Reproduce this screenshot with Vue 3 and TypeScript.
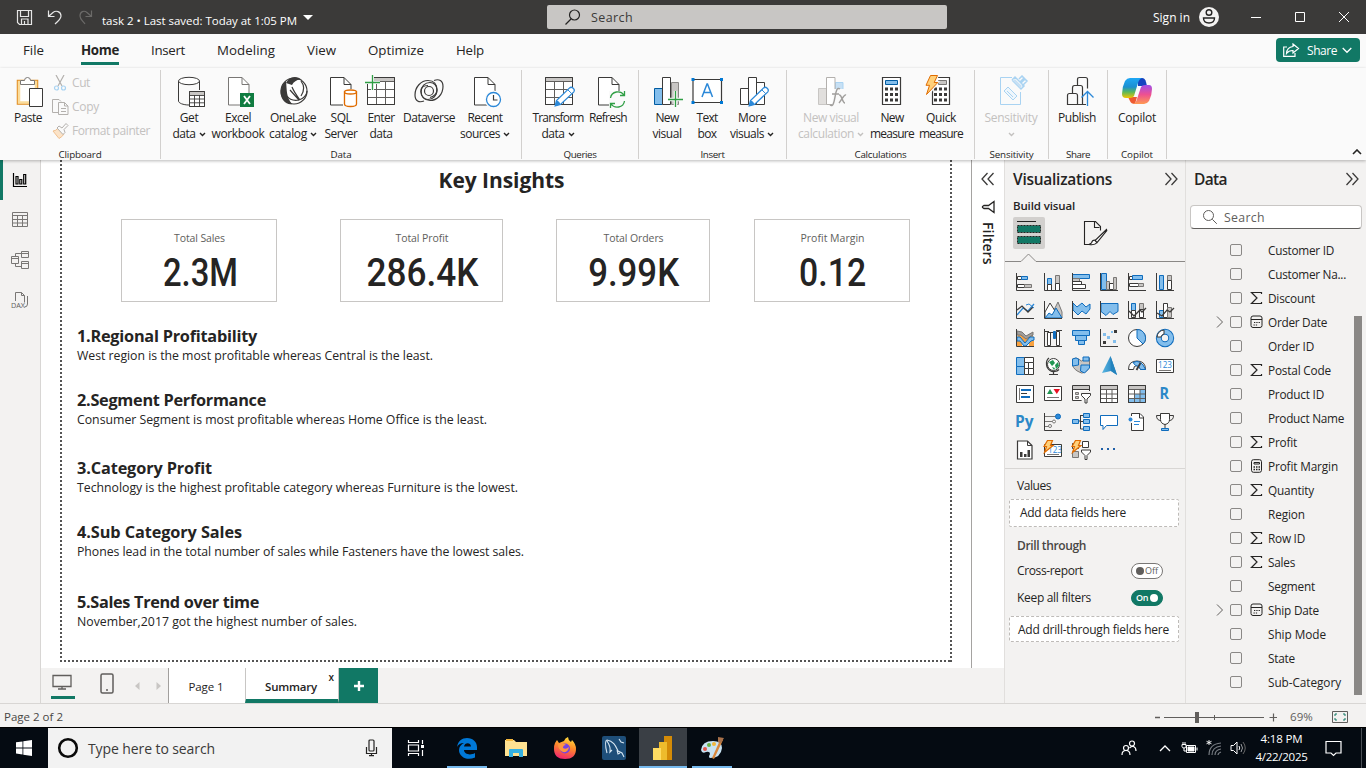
<script setup lang="ts">
interface Label { t: string; w: number; caret?: boolean }
interface Tool { icon: string; w: number; lines: Label[]; off?: boolean }
interface Group { name: string; nw: number; width: number; pad: number; tools: Tool[] }

const vFit = {
  mounted(el: HTMLElement, b: { value: number; modifiers: Record<string, boolean> }) {
    const r = document.createRange()
    r.selectNodeContents(el)
    const w = r.getBoundingClientRect().width
    if (b.modifiers.scale) el.style.transform = `scaleX(${b.value / w})`
    else el.style.letterSpacing = `${(b.value - w) / (el.textContent || ' ').length}px`
  },
}

const K = '#3b3a39'
const B = '#0f6cbd'
const L = '#83beec'
const page = (x: number, c = K) =>
  `<path d="M${x + 0.5} 2.5h13.5l7 7v20.5h-20.5z" fill="#fff" stroke="${c}"/><path d="M${x + 14} 2.5v7h7" fill="none" stroke="${c}"/>`
const grid = (x: number) =>
  `<path d="M${x + 0.5} 2.5h27v27h-27z" fill="#fff" stroke="${K}"/><path d="M${x + 1} 3h26v3.500h-26z" fill="#c8c6c4"/><path d="M${x} 6.500h28M${x} 14.500h28M${x} 22.500h28M${x + 9.5} 6v24M${x + 18.5} 6v24" stroke="#605e5c" fill="none"/><path d="M${x + 0.5} 2.500h27v27h-27z" fill="none" stroke="${K}"/>`
const pencil = '<path d="M13.200 30.800l1.300-5.300L27.600 12.900q1.600-1.400 3.600.4t.4 3.800L18.500 29.500z" fill="#fff" stroke="#2b88d8" stroke-width="1.300"/><path d="M13 31l1.500-5.500q3 .5 4 4z" fill="#2b88d8"/><path d="M26 15l3.700 3.600" stroke="#2b88d8"/>'
const dots = (x: number, y: number) => {
  let d = ''
  for (let r = 0; r < 3; r++) for (let c = 0; c < 3; c++) d += `M${x + c * 5} ${y + r * 5.5}h3v3h-3z`
  return `<path d="${d}" fill="${K}"/>`
}

const icons: Record<string, string> = {
  get: `<path d="M5.500 6v20c0 2 4.500 4 10.500 4M26.500 6v9" fill="none" stroke="${K}"/><ellipse cx="16" cy="6" rx="10.500" ry="3.700" fill="#fff" stroke="${K}"/><path d="M16.500 16.500h15v15h-15z" fill="#fff" stroke="${K}"/><path d="M16.500 17h15v3h-15z" fill="#c8c6c4"/><path d="M16 20.500h16M16 24h16M16 27.800h16M21.500 20v12M26.500 20v12M16.500 16.500h15v15h-15z" stroke="${K}" stroke-width=".9" fill="none"/>`,
  excel: `${page(6, '#797775')}<path d="M18 18h14v14H18z" fill="#107c41"/><path d="M22 21l6 8M28 21l-6 8" stroke="#fff" stroke-width="1.800"/>`,
  lake: `<circle cx="17" cy="16" r="13" fill="#fff" stroke="${K}" stroke-width="1.200"/><path d="M9 8c3-7 11-8 16-3-4-1-8 1-10 5z" fill="${K}"/><path d="M9 6c-6 5-7 13-3 19 3 4 7 5 9 4-6-7-5-14-6-23z" fill="${K}"/><path d="M13 15l9 10c4-1 8-5 8-9M22 25c-6 1-10-1-12-4M15 12c2 5 5 9 8 13M24 6c3 4 4 9 0 15" fill="none" stroke="${K}" stroke-width="1.200"/>`,
  sql: `${page(5)}<path d="M18 14h15v18H18z" fill="#fafafa"/><path d="M19.500 17v12c0 1.500 3 2.500 6 2.500s6-1 6-2.500V17z" fill="#fff" stroke="#e06c00" stroke-width="1.300"/><ellipse cx="25.500" cy="17" rx="6" ry="2" fill="#fff" stroke="#e06c00" stroke-width="1.300"/>`,
  enter: `${grid(2)}<path d="M0 0h9v9H0z" fill="#fafafa"/><path d="M7.500 0v15M0 7.500h15" stroke="#fafafa" stroke-width="3"/><path d="M7.500 0v15M0 7.500h15" stroke="#2f9e44" stroke-width="1.300"/>`,
  verse: `<g fill="none" stroke="${K}" stroke-width="1.200"><circle cx="16" cy="16" r="4.500"/><path d="M21 5.500c5-2 9 0 9 6 0 8-6 14-13 14-5 0-9-4-9-9s4-9 9-9c4 0 7 3 7 7 0 5-3 7-7 8"/><path d="M11 26c-5 2-9 0-9-6C2 12 8 5.500 15 5.500c6 0 9 4 9 10 0 5-4 9-9 9-4 0-7-3-7-8 0-4 3-6 7-6"/></g>`,
  recent: `${page(5)}<circle cx="24.500" cy="24.500" r="9" fill="#fafafa"/><circle cx="24.500" cy="24.500" r="7" fill="#fff" stroke="#2b88d8" stroke-width="1.300"/><path d="M24.500 20v5h4" fill="none" stroke="${K}" stroke-width="1.200"/>`,
  transform: `${grid(3)}${pencil}`,
  refresh: `${page(6)}<path d="M17 16h17v17H17z" fill="#fafafa"/><path d="M18.500 23c1-7 10-8 13.500-3M32.500 16v4.500H28M32.500 26c-1 7-10 8-13.500 3M18.500 33v-4.500H23" fill="none" stroke="#2f9e44" stroke-width="1.300"/>`,
  visual: `<path d="M3.500 13.500h8v16h-8z" fill="${L}" stroke="#005ba1"/><path d="M20.500 7.500h7v22h-7z" fill="#c8c6c4" stroke="#8a8886"/><path d="M11.500 2.500h8v27h-8z" fill="#fff" stroke="${K}"/><path d="M24.500 16v16M17 24.500h15" stroke="#fafafa" stroke-width="3.500"/><path d="M24.500 16v16M17 24.500h15" stroke="#2f9e44" stroke-width="1.300"/>`,
  text: `<path d="M2 4.500h28.500v23H2z" fill="#fff" stroke="${K}" stroke-width="1.200"/><path d="M.5 3h3v3h-3zM29 3h3v3h-3zM.5 26h3v3h-3zM29 26h3v3h-3z" fill="#0078d4"/><path d="M11 22l5-13h.5l5 13M12.800 17.500h7" fill="none" stroke="#2b88d8" stroke-width="1.500"/>`,
  more: `<path d="M4.500 13.500h8v16h-8zM20.500 7.500h8v22h-8zM12.500 2.500h8v27h-8z" fill="#fff" stroke="${K}"/>${pencil}`,
  calc: `<path d="M3.500 13.500h8v16h-8z" fill="#e1dfdd" stroke="#c8c6c4"/><path d="M20.500 7.500h7.500v10h-7.500z" fill="#c7e0f4" stroke="#a9d3f2"/><path d="M11.500 2.500h8.500v27h-8.500z" fill="#fff" stroke="#b3b0ad"/><path d="M19 14h13v16H17z" fill="#fafafa"/><path d="M25 14c-3-2-4 2-5 8s-2 10-5 8M17 19h7M24 20c3-1 3 8 6 8M31 20c-2-1-5 6-7 8" fill="none" stroke="#a19f9d" stroke-width="1.500"/>`,
  measure: `<path d="M6.500 2.500h18v27h-18z" fill="#fff" stroke="${K}" stroke-width="1.200"/><path d="M9.500 5.500h12v4h-12z" fill="${L}" stroke="#005ba1"/>${dots(9, 12.500)}`,
  quick: `<path d="M7.500 2.500h17v27h-17z" fill="#fff" stroke="${K}" stroke-width="1.200"/><path d="M13.500 5.500h8v4h-8z" fill="#c8c6c4" stroke="#797775"/>${dots(9, 12.500)}<path d="M3 0h11l-2 6h3L3 22l2-8H0z" fill="#fafafa"/><path d="M5.500.5h7l-3.300 7h3.600L1.500 19.500l3-9.200H1z" fill="#ffd07a" stroke="#e06c00"/>`,
  sens: `<path d="M17 2.500H5.500v27h20V17" fill="none" stroke="#a9d3f2"/><path d="M9 16l4-4 9 9-4 4zM12 16l6 6" fill="#eef6fc" stroke="#a9d3f2"/><path d="M17 5l3-3 5 5 4-4-2-2-3 3M17 5l9 9 3-3-3-3 4-4 2 2-5 5" fill="none" stroke="#a9d3f2" stroke-width="1.500"/><path d="M19 5l7 7" stroke="#c7e0f4" stroke-width="2.500"/>`,
  publish: `<path d="M6.500 29.500v-9q0-2 2-2h6q2 0 2 2v9zM11.500 18v-5q0-2.500 2-2.500h6q2 0 2 2v17h-5M16.500 10V4.500q0-2 2-2h6q2 0 2 2v9M21 29.500h4" fill="none" stroke="${K}" stroke-width="1.200"/><path d="M26.500 31V17M20.500 22.500l6-6 6 6" fill="none" stroke="#2b88d8" stroke-width="1.300"/>`,
  copilot: `<defs><linearGradient id="ca" x1="0" y1="0" x2="0" y2="1"><stop offset="0" stop-color="#1ea7f5"/><stop offset=".45" stop-color="#1b8fd0"/><stop offset=".7" stop-color="#5ab85a"/><stop offset="1" stop-color="#f5c400"/></linearGradient><linearGradient id="cb" x1="0" y1="0" x2="0" y2="1"><stop offset="0" stop-color="#a04ee8"/><stop offset=".5" stop-color="#ee5091"/><stop offset="1" stop-color="#ff9a52"/></linearGradient></defs><path d="M17 3h4q3 0 4 4l1 4h-9z" fill="#1544c0"/><path d="M7 22h9l-2 7q-4 0-5-3z" fill="#ee5a32"/><path d="M9 3h12q-3 1-4 5l-4 13q-1 2-4 2H5q-4 0-4-4 0-7 3-13 2-3 5-3z" fill="url(#ca)"/><path d="M23 29H12q3-1 4-5l4-12q1-2 4-2h4q3 0 3 4 0 6-3 12-2 3-5 3z" fill="url(#cb)"/>`,
}

const groups: Group[] = [
  { name: 'Data', nw: 21, width: 361, pad: 6, tools: [
    { icon: 'get', w: 44, lines: [{ t: 'Get', w: 18.500 }, { t: 'data', w: 23, caret: true }] },
    { icon: 'excel', w: 54, lines: [{ t: 'Excel', w: 26 }, { t: 'workbook', w: 53 }] },
    { icon: 'lake', w: 56, lines: [{ t: 'OneLake', w: 46 }, { t: 'catalog', w: 38, caret: true }] },
    { icon: 'sql', w: 40, lines: [{ t: 'SQL', w: 21 }, { t: 'Server', w: 33 }] },
    { icon: 'enter', w: 40, lines: [{ t: 'Enter', w: 27 }, { t: 'data', w: 23 }] },
    { icon: 'verse', w: 56, lines: [{ t: 'Dataverse', w: 52 }] },
    { icon: 'recent', w: 56, lines: [{ t: 'Recent', w: 35 }, { t: 'sources', w: 40, caret: true }] },
  ] },
  { name: 'Queries', nw: 33, width: 117, pad: 10, tools: [
    { icon: 'transform', w: 52, lines: [{ t: 'Transform', w: 51 }, { t: 'data', w: 23, caret: true }] },
    { icon: 'refresh', w: 48, lines: [{ t: 'Refresh', w: 38 }] },
  ] },
  { name: 'Insert', nw: 24, width: 148, pad: 10, tools: [
    { icon: 'visual', w: 36, lines: [{ t: 'New', w: 23 }, { t: 'visual', w: 29 }] },
    { icon: 'text', w: 44, lines: [{ t: 'Text', w: 21 }, { t: 'box', w: 19 }] },
    { icon: 'more', w: 46, lines: [{ t: 'More', w: 28 }, { t: 'visuals', w: 34, caret: true }] },
  ] },
  { name: 'Calculations', nw: 52, width: 188, pad: 6, tools: [
    { icon: 'calc', w: 76, off: true, lines: [{ t: 'New visual', w: 56 }, { t: 'calculation', w: 56, caret: true }] },
    { icon: 'measure', w: 46, lines: [{ t: 'New', w: 23 }, { t: 'measure', w: 44 }] },
    { icon: 'quick', w: 52, lines: [{ t: 'Quick', w: 30 }, { t: 'measure', w: 44 }] },
  ] },
  { name: 'Sensitivity', nw: 44, width: 74, pad: 0, tools: [
    { icon: 'sens', w: 72, off: true, lines: [{ t: 'Sensitivity', w: 53 }, { t: '', w: 0, caret: true }] },
  ] },
  { name: 'Share', nw: 24, width: 59, pad: 0, tools: [{ icon: 'publish', w: 56, lines: [{ t: 'Publish', w: 38 }] }] },
  { name: 'Copilot', nw: 32, width: 59, pad: 0, tools: [{ icon: 'copilot', w: 58, lines: [{ t: 'Copilot', w: 38 }] }] },
]

const menu = [
  { t: 'File', w: 21 }, { t: 'Home', w: 38 }, { t: 'Insert', w: 34 }, { t: 'Modeling', w: 58 },
  { t: 'View', w: 29 }, { t: 'Optimize', w: 56 }, { t: 'Help', w: 28 },
]

const cards = [
  { t: 'Total Sales', tw: 51, v: '2.3M', vw: 75, w: 156, gap: 0 },
  { t: 'Total Profit', tw: 53, v: '286.4K', vw: 112, w: 163, gap: 63 },
  { t: 'Total Orders', tw: 60, v: '9.99K', vw: 91, w: 154, gap: 53 },
  { t: 'Profit Margin', tw: 64, v: '0.12', vw: 67, w: 156, gap: 44 },
]

const insights = [
  { h: '1.Regional Profitability', hw: 180, p: 'West region is the most profitable whereas Central is the least.', pw: 356, y: 64 },
  { h: '2.Segment Performance', hw: 189, p: 'Consumer Segment is most profitable whereas Home Office is the least.', pw: 410, y: 68 },
  { h: '3.Category Profit', hw: 135, p: 'Technology is the highest profitable category whereas Furniture is the lowest.', pw: 441, y: 64 },
  { h: '4.Sub Category Sales', hw: 165, p: 'Phones lead in the total number of sales while Fasteners have the lowest sales.', pw: 447, y: 70 },
  { h: '5.Sales Trend over time', hw: 182, p: 'November,2017 got the highest number of sales.', pw: 280, y: 50 },
]

const axis = `<path d="M1.500 1v17.500H19" fill="none" stroke="${K}"/>`
const rc = (x: number, y: number, w: number, h: number, f: string, s: string) =>
  `<path d="M${x + 0.5} ${y + 0.5}h${w - 1}v${h - 1}h${1 - w}z" fill="${f}" stroke="${s}"/>`
const blue = (x: number, y: number, w: number, h: number) => rc(x, y, w, h, L, B)
const gray = (x: number, y: number, w: number, h: number) => rc(x, y, w, h, '#c8c6c4', '#797775')
const white = (x: number, y: number, w: number, h: number) => rc(x, y, w, h, '#fff', K)
const bolt = '<path d="M4.500.5h5l-2 5h2.500L1.500 12.500l2-6H1z" fill="#ffd07a" stroke="#e06c00" stroke-width="1.200"/>'
const funnel = (x: number, y: number) => `<path d="M${x} ${y}h9v2l-3.500 3.500v4h-2v-4L${x} ${y + 2}z" fill="#fff" stroke="${K}"/>`
const tbl = (blueFill = '') =>
  `${white(1, 1, 18, 18)}${blueFill}<path d="M2 2h16v3H2z" fill="#c8c6c4"/><path d="M1 5.500h18M1 10h18M1 14.500h18M7.500 5v14M13 5v14" stroke="#605e5c" fill="none"/><path d="M1.500 1.500h17v17h-17z" fill="none" stroke="${K}"/>`
const num = (x: number, y: number) =>
  `<text x="${x}" y="${y}" font-family="Open Sans" font-size="9" fill="#2b88d8" textLength="14" lengthAdjust="spacingAndGlyphs">123</text>`

const visuals: string[] = [
  `${white(2, 4, 5, 4)}${blue(6, 4, 7, 4)}${white(2, 12, 8, 4)}${gray(9, 12, 8, 4)}${axis}`,
  `${blue(4, 6, 5, 7)}${white(4, 12, 5, 7)}${gray(12, 3, 5, 9)}${white(12, 11, 5, 8)}${axis}`,
  `${blue(1, 2, 18, 5)}${gray(1, 6, 8, 4)}${white(1, 9, 10, 4)}${white(1, 12, 14, 5)}${axis}`,
  `${blue(2, 1, 6, 17)}${gray(7, 9, 4, 9)}${white(10, 11, 5, 7)}${gray(14, 5, 4, 13)}${axis}`,
  `${white(2, 4, 5, 4)}${blue(5, 3, 11, 5)}${white(2, 11, 10, 4)}${gray(11, 11, 6, 4)}${axis}`,
  `${blue(4, 3, 5, 15)}${gray(12, 3, 5, 6)}${white(12, 8, 5, 10)}${axis}`,
  `<path d="M2 15l6-7 5 3 6-7" fill="none" stroke="#2b88d8" stroke-width="1.300"/><path d="M2 10l5-4 6 6 5-5" fill="none" stroke="${K}" stroke-width="1.300"/><path d="M11 5l3-1 5 4" fill="none" stroke="#2b88d8"/>${axis}`,
  `<path d="M9 14l6-12 4 10v6H9z" fill="#c8c6c4" stroke="#797775"/><path d="M2 12l5-9 5 8-4 7H2z" fill="#fff" stroke="${K}"/><path d="M2 18l4-5 3 2 4-7 6 10z" fill="${L}" stroke="${B}"/>${axis}`,
  `<path d="M2 3l4 4 5-4 4 4 4-3v5l-4 5-4-3-4 4-5-5z" fill="${L}" stroke="${B}"/>${axis}`,
  `<path d="M2 3.500h17v8l-5 3-3-3-4 4-5-4z" fill="${L}" stroke="${B}"/>${axis}`,
  `${blue(4, 3, 5, 8)}${white(4, 10, 5, 8)}${gray(12, 3, 5, 7)}${white(12, 9, 5, 9)}<path d="M2 11l5 5 6-6 2 2 4-4" fill="none" stroke="${K}" stroke-width="1.300"/>${axis}`,
  `${blue(4, 10, 5, 8)}${white(8, 3, 5, 15)}${gray(12, 7, 5, 11)}<path d="M2 13l5 3 5-6 3 2 4-4" fill="none" stroke="${K}" stroke-width="1.300"/>${axis}`,
  `<path d="M2 12h5v6H2zM14 12h5v6h-5zM2 5h3l5 4 6-4h2v5l-4 1-5 5-6-6z" fill="#f8a13f"/><path d="M2 3l5 1 4 4 7-4v3l-7 4-5-4H2z" fill="#a19f9d" stroke="#797775"/><path d="M2 9h3l5 6 5-6h4v3l-3 1-5 5H9l-4-5H2z" fill="${L}" stroke="${B}"/>${axis}`,
  `${white(4, 4, 4, 14)}<path d="M7 4.500h4" stroke="${K}"/>${rc(10, 3, 3, 8, '#0f6cbd', B)}${white(13, 3, 4, 15)}<path d="M1 3.500h5M13 2.500h6" stroke="${K}"/>${axis}`,
  `${blue(1, 2, 18, 6)}${blue(4, 7, 12, 6)}${blue(7, 12, 7, 5)}`,
  `<path d="M12 3h2v2h-2zM8 8h3v3H8zM4 5h3v3H4zM14 12h3v3h-3z" fill="${L}"/><path d="M15 2h3v3h-3zM4 13h3v3H4z" fill="${K}"/>${axis}`,
  `<circle cx="10" cy="10" r="8.500" fill="#fff" stroke="${K}"/><path d="M10 1.500a8.500 8.500 0 0 1 6 14.500l-6-6z" fill="${L}" stroke="${B}"/>`,
  `<circle cx="10" cy="10" r="6.200" fill="none" stroke="${B}" stroke-width="6"/><circle cx="10" cy="10" r="6.200" fill="none" stroke="${L}" stroke-width="4"/><path d="M2 9a8 8 0 0 1 7-7v4a4 4 0 0 0-3 3z" fill="#fff" stroke="${K}"/>`,
  `${blue(1, 1, 9, 10)}${blue(1, 10, 9, 9)}${white(9, 1, 10, 6)}${white(9, 6, 5, 7)}${white(13, 6, 6, 7)}${white(9, 12, 5, 7)}${white(13, 12, 6, 7)}`,
  `<circle cx="10.500" cy="8.500" r="6" fill="#fff" stroke="${K}"/><path d="M6 6l4-2 2 3-3 3zM12 9l3-3 1 4-3 3zM9 11l3 1-1 2z" fill="#219653"/><path d="M6 2C2 5 3 12 7 14.500c3 2 7 1 9-1M10.500 16v2.500M6 18.500h9" fill="none" stroke="${K}" stroke-width="1.200"/>`,
  `<path d="M1.500 3q4-2 6 0l3 2 8-3v8q-2 7-8 7-8-3-9-8z" fill="#c8c6c4" stroke="#797775"/><path d="M1.500 3q4-2 6 0v6l-6 1zM10 9h8.500v3l-5 5-4-2zM12 1h6v4h-6z" fill="${L}" stroke="${B}"/>`,
  `<defs><linearGradient id="az" x1="0" x2="1"><stop offset="0" stop-color="#5ab7e2"/><stop offset="1" stop-color="#1673b5"/></linearGradient></defs><path d="M11.500 0L18 19l-6-4-9 2z" fill="url(#az)"/><path d="M11.500 0L18 19l-6-4z" fill="#2383bd"/>`,
  `<path d="M1.500 13.500q0-8.500 8.500-8.500t8.500 8.500h-5q0-4-3.500-4t-3.500 4z" fill="#fff" stroke="${K}"/><path d="M6 6.500q8-4 12.500 7h-5q-1-4-5-4z" fill="${L}" stroke="${B}"/><path d="M9.500 14l4-7" stroke="${K}" stroke-width="1.800"/>`,
  `${white(1, 3, 18, 14)}${num(3, 12)}<path d="M4 14.500h12" stroke="#797775"/>`,
  `${white(1, 1, 18, 18)}<path d="M4.500 4v12" stroke="#797775"/><path d="M6 6h10M6 13h9" stroke="${B}" stroke-width="1.800"/><path d="M6 9.500h6" stroke="${K}"/>`,
  `${white(1, 2, 18, 15)}<path d="M4 10l3-5 3 5z" fill="#219653"/><path d="M10.500 5h6.500l-3.200 5z" fill="#e81123"/><path d="M4 13.500h12" stroke="#797775"/>`,
  `${white(1, 1, 18, 16)}<path d="M2 2h16v3H2z" fill="#c8c6c4"/><path d="M1 5.500h18" stroke="${K}"/>${gray(4, 8, 4, 3)}${gray(4, 12, 4, 3)}<path d="M9 7h10v12h-8z" fill="#f3f2f1"/>${funnel(10.500, 9.500)}`,
  tbl(),
  tbl(`<path d="M7.500 10h6v8.500h-6zM13 5h5.500v13.500H13zM2 14.500h6v4H2z" fill="${L}"/>`),
  `<text x="4.500" y="15" font-family="Open Sans" font-weight="700" font-size="15.500" fill="#2b88c8" textLength="9.500" lengthAdjust="spacingAndGlyphs">R</text>`,
  `<text x="0" y="14.500" font-family="Open Sans" font-weight="700" font-size="16" fill="#2b88c8" textLength="18.500" lengthAdjust="spacingAndGlyphs">Py</text>`,
  `<path d="M2 4.500h12M2 9.500h8M2 14.500h5" stroke="#797775"/><circle cx="15" cy="4.500" r="2.500" fill="#2b88d8" stroke="${B}"/><circle cx="11" cy="9.500" r="1.500" fill="#fff" stroke="#797775"/><circle cx="7" cy="14" r="1.500" fill="#fff" stroke="#797775"/>${axis}`,
  `<path d="M7 9h3M9.500 3.500h3M9.500 3v14h3M9.500 9.500h3" stroke="${K}" fill="none"/>${blue(1, 7, 7, 5)}${blue(12, 1, 7, 5)}${blue(12, 7, 7, 5)}${blue(12, 14, 7, 5)}`,
  `<path d="M1.500 3.500h17v10h-11l-3.500 4v-4H1.500z" fill="#fff" stroke="${B}"/>`,
  `<path d="M4.500 11v7.500h12V5l-3.500-3.500H4.500V4M12.500 1.500V6h4" fill="#fff" stroke="${K}"/><circle cx="3.500" cy="7.500" r="2" fill="#2b88d8"/><path d="M7 9.500h6M7 12.500h5" stroke="#2b88d8"/>`,
  `<path d="M5.500 1.500h9v6q0 4-4.500 5-4.500-1-4.500-5z" fill="#fff" stroke="${K}"/><path d="M5 3.500H1.500q0 5 4.500 5M15 3.500h3.500q0 5-4.500 5M10 12v4" fill="none" stroke="${K}"/>${blue(6, 16, 8, 3)}`,
  `<path d="M2.500 1h10l4.500 4.500V19H2.500z" fill="#fff" stroke="${K}" stroke-width="1.200"/><path d="M12.500 1v4.500H17" fill="none" stroke="${K}"/><path d="M5 12h2.500v5H5zM9 14h2.500v3H9zM12.500 10H15v7h-2.500z" fill="${K}"/>`,
  `${white(1, 4, 18, 13)}${num(5, 12.500)}<path d="M4 14.500h12" stroke="#797775"/>${bolt}`,
  `${white(11, 1, 7, 7)}${gray(1, 11, 7, 7)}${white(1, 3, 7, 6)}<path d="M9 9h10v11h-8z" fill="#f3f2f1"/>${funnel(10.500, 10)}${bolt}`,
  '<path d="M2 8h2v2H2zM8 8h2v2H8zM14 8h2v2h-2z" fill="#1f5fa8"/>',
]

interface Field { t: string; w: number; k?: 'sum' | 'date' | 'calc' }
const fields: Field[] = [
  { t: 'Customer ID', w: 66 }, { t: 'Customer Na...', w: 78 }, { t: 'Discount', w: 47, k: 'sum' },
  { t: 'Order Date', w: 59, k: 'date' }, { t: 'Order ID', w: 46 }, { t: 'Postal Code', w: 63, k: 'sum' },
  { t: 'Product ID', w: 56 }, { t: 'Product Name', w: 76 }, { t: 'Profit', w: 29, k: 'sum' },
  { t: 'Profit Margin', w: 70, k: 'calc' }, { t: 'Quantity', w: 46, k: 'sum' }, { t: 'Region', w: 37 },
  { t: 'Row ID', w: 37, k: 'sum' }, { t: 'Sales', w: 27, k: 'sum' }, { t: 'Segment', w: 47 },
  { t: 'Ship Date', w: 51, k: 'date' }, { t: 'Ship Mode', w: 58 }, { t: 'State', w: 27 }, { t: 'Sub-Category', w: 73 },
]
</script>

<template>
  <div class="app">
    <header class="titlebar">
      <svg class="quick" width="80" height="34" fill="none" stroke="#e6e6e6" stroke-width="1.200">
        <path d="M2.500 10.500h14v14h-12l-2-2zM5.500 10.500v6h8v-6M6.500 24v-5h6.500v5M9.500 21v3" />
        <path d="M33.500 10.500v6h6M34 16l4-3.500c3-2.500 8-1 8 3.500 0 3-2 4-6 8" />
        <path d="M76.500 10.500v6h-6M76 16l-4-3.500c-3-2.500-7-1-7 3.500 0 3 2 4 5 8" stroke="#6b6a68" />
      </svg>
      <span v-fit="195" class="doc">task 2 • Last saved: Today at 1:05 PM</span>
      <i class="tri"></i>
      <div class="tsearch">
        <svg width="18" height="18" fill="none" stroke="#252423" stroke-width="1.200"><circle cx="10.500" cy="7" r="5" /><path d="M7 11l-5.500 5.500" /></svg>
        <span v-fit="42">Search</span>
      </div>
      <span v-fit="37" class="signin">Sign in</span>
      <svg class="avatar" width="20" height="20"><circle cx="10" cy="10" r="10" fill="#f3f2f1" /><g fill="none" stroke="#252423" stroke-width="1.400"><circle cx="10" cy="5.500" r="2.800" /><path d="M4.500 11h11q0 5-5.500 5t-5.500-5z" /></g></svg>
      <svg class="wins" width="100" height="12" fill="none" stroke="#fff"><path d="M1 6.500h10M45.500 1.500h9v9h-9zM89 1l10 10M99 1L89 11" /></svg>
    </header>

    <nav class="menu">
      <div v-for="m in menu" :key="m.t" class="mi" :class="{ active: m.t === 'Home', file: m.t === 'File' }"><span v-fit="m.w">{{ m.t }}</span></div>
      <button class="share">
        <svg width="17" height="14" fill="none" stroke="#fff" stroke-width="1.200"><path d="M4 4H.7v9.300H12V10" /><path d="M10 1l5.500 4.500L10 10V7.500C7 7.300 5 8.500 3.500 10.500c.2-4 2.500-6.500 6.500-7z" /></svg>
        <span v-fit="30">Share</span>
        <svg width="10" height="7" fill="none" stroke="#fff" stroke-width="1.300"><path d="M.7 1l4.300 4.300L9.300 1" /></svg>
      </button>
    </nav>

    <section class="ribbon">
      <div class="grp clip">
        <div class="cliprow">
          <div class="paste">
            <svg width="32" height="32"><path d="M5.500 5.500h20v23.500h-20z" fill="#fff" stroke="#e08a1e" stroke-width="1.500" /><path d="M7 7h17v20.500H7z" fill="none" stroke="#fbdc9a" stroke-width="2.500" /><path d="M8.500 9.500v-4h4q0-3 3-3t3 3h4v4z" fill="#fff" stroke="#797775" /><path d="M17.500 13.500h13v18h-13z" fill="#fff" stroke="#3b3a39" /></svg>
            <span v-fit="28">Paste</span>
          </div>
          <div class="cliplist">
            <div><svg width="17" height="16" fill="none" stroke="#b3b0ad" stroke-width="1.200"><path d="M4 0l6 11M12 0L6 11" /><g stroke="#a9d3f2"><circle cx="4.500" cy="13" r="2" /><circle cx="11.500" cy="13" r="2" /></g></svg><span v-fit="18">Cut</span></div>
            <div><svg width="17" height="16" fill="none" stroke="#b3b0ad"><path d="M6 13.500H.5v-13H7l2 2M6.500 3.500h6l3.500 3.500v8.500H6.500zM12.500 3.500v3.500H16M9 9.500h5M9 12.500h5" /></svg><span v-fit="27">Copy</span></div>
            <div><svg width="17" height="16" fill="none" stroke="#b3b0ad"><path d="M1 8q3 0 5-3l6 6q-2 3-5 4.500z" fill="#fbe3c8" stroke="#f0c090" /><path d="M5 5l2-2 3 2 4-4.500 2 2-4 4 1 3-2 2z" fill="#fafafa" /></svg><span v-fit="78">Format painter</span></div>
          </div>
        </div>
        <div class="gname"><span v-fit="43">Clipboard</span></div>
      </div>
      <div v-for="g in groups" :key="g.name" class="grp" :style="{ width: g.width + 'px' }">
        <div class="tools" :style="{ paddingLeft: g.pad + 'px' }">
          <div v-for="(b, i) in g.tools" :key="i" class="tool" :class="{ off: b.off }" :style="{ width: b.w + 'px' }">
            <svg width="34" height="34" v-html="icons[b.icon]"></svg>
            <div v-for="(l, j) in b.lines" :key="j" class="line">
              <span v-if="l.t" v-fit="l.w">{{ l.t }}</span>
              <svg v-if="l.caret" class="caret" width="7" height="5"><path d="M1 1l2.500 2.500L6 1" fill="none" stroke="currentColor" stroke-width="1.400" /></svg>
            </div>
          </div>
        </div>
        <div class="gname"><span v-fit="g.nw">{{ g.name }}</span></div>
      </div>
      <svg class="collapse" width="10" height="6"><path d="M1 5l4-4 4 4" fill="none" stroke="#252423" stroke-width="1.600" /></svg>
    </section>

    <main class="body">
      <aside class="rail">
        <div class="ri on"><svg width="20" height="20" fill="none" stroke="#000" stroke-width="1.200"><path d="M3.500 3v13.500H17M6 6.500h2v7.500H6zM9.800 9.500h2V14h-2zM13.700 4.500h2V14h-2z" /></svg></div>
        <div class="ri"><svg width="20" height="20" fill="none" stroke="#797775"><path d="M2.500 2.500h15v14h-15zM2.500 5.500h15M2.500 9.500h15M2.500 13h15M7.500 5.500v11M12.500 5.500v11" /></svg></div>
        <div class="ri"><svg width="20" height="20" fill="none" stroke="#797775"><path d="M11.500 1.500h7v6h-7zM11.500 11.500h7v7h-7zM1.500 6.500h7v7h-7zM11.500 3.500h7M11.500 13.500h7M1.500 8.500h7M5.500 6.500v-3h6M5.500 13.500v3h6" /></svg></div>
        <div class="ri"><svg width="20" height="20"><path d="M5.500 11V2.500h6l3 3v7M11.500 2.500v3h3M17.500 6v8q0 3-3 3" fill="none" stroke="#797775" /><text x="1" y="17.500" font-family="Open Sans" font-size="7" fill="#605e5c" textLength="14" lengthAdjust="spacingAndGlyphs">DAX</text></svg></div>
      </aside>

      <div class="center">
        <div class="stage">
          <div class="canvas">
            <h1><span v-fit="126">Key Insights</span></h1>
            <div class="cards">
              <div v-for="c in cards" :key="c.t" class="card" :style="{ width: c.w + 'px', marginLeft: c.gap + 'px' }">
                <span v-fit="c.tw" class="ct">{{ c.t }}</span>
                <span v-fit.scale="c.vw" class="cv">{{ c.v }}</span>
              </div>
            </div>
            <div class="insights">
              <section v-for="s in insights" :key="s.h" :style="{ height: s.y + 'px' }">
                <h2><span v-fit="s.hw">{{ s.h }}</span></h2>
                <p><span v-fit="s.pw">{{ s.p }}</span></p>
              </section>
            </div>
          </div>
        </div>
        <div class="filters">
          <svg width="14" height="14" fill="none" stroke="#3b3a39" stroke-width="1.300"><path d="M6.500 1L1 7l5.500 6M12.500 1L7 7l5.500 6" /></svg>
          <svg width="14" height="14" fill="none" stroke="#252423" stroke-width="1.300"><path d="M13 1.500v11L7.500 8.500H3l-1.500-1v-1L3 5.500h4.500z" /></svg>
          <span>Filters</span>
        </div>
      </div>

      <aside class="viz">
        <div class="phead"><span v-fit="99">Visualizations</span><svg width="14" height="14" fill="none" stroke="#3b3a39" stroke-width="1.300"><path d="M1.500 1L7 7l-5.500 6M7.500 1L13 7l-5.500 6" /></svg></div>
        <div class="bv"><span v-fit="62">Build visual</span></div>
        <div class="modes">
          <div class="mode on"><svg width="26" height="26"><path d="M1 1.500h19" stroke="#252423" /><path d="M1.500 5.500h23v7h-23zM1.500 16.500h23v7h-23z" fill="#117865" stroke="#252423" stroke-dasharray="2 1" /></svg></div>
          <div class="mode"><svg width="28" height="28" fill="none" stroke="#252423" stroke-width="1.100"><path d="M11 25.500H3.500v-23h11l5 5v4M13.500 2.500v6h5" /><path d="M25.500 10.500L14 21.500l2 2.200 9.800-12zM14 21q-3 0-3.500 3l-2.500 1.500q6 1 8-2z" fill="#fff" /></svg></div>
        </div>
        <svg class="notch" width="180" height="9" fill="none" stroke="#8a8886"><path d="M0 8.500h16l7.500-7.500 7.500 7.500H180" /></svg>
        <div class="vgrid"><svg v-for="(v, i) in visuals" :key="i" width="20" height="20" v-html="v"></svg></div>
        <div class="wells">
          <div class="wl"><span v-fit="34">Values</span></div>
          <div class="drop one"><span v-fit="106">Add data fields here</span></div>
          <div class="wl bold"><span v-fit="69">Drill through</span></div>
          <div class="tg"><span v-fit="66">Cross-report</span><div class="sw"><i></i><em v-fit="13">Off</em></div></div>
          <div class="tg"><span v-fit="74">Keep all filters</span><div class="sw on"><em v-fit="12">On</em><i></i></div></div>
          <div class="drop two"><span v-fit="151">Add drill-through fields here</span></div>
        </div>
      </aside>

      <aside class="data">
        <div class="phead"><span v-fit="33">Data</span><svg width="14" height="14" fill="none" stroke="#3b3a39" stroke-width="1.300"><path d="M1.500 1L7 7l-5.500 6M7.500 1L13 7l-5.500 6" /></svg></div>
        <div class="dsearch"><svg width="16" height="16" fill="none" stroke="#605e5c"><circle cx="6.500" cy="6.500" r="5" /><path d="M10.300 10.300l4.500 4.500" /></svg><span v-fit="41">Search</span></div>
        <div class="flist">
          <div class="frows">
            <div v-for="f in fields" :key="f.t" class="field">
              <svg class="exp" width="8" height="12"><path v-if="f.k === 'date'" d="M1 .5L6.500 6 1 11.500" fill="none" stroke="#605e5c" /></svg>
              <i class="cb"></i>
              <svg class="fk" width="13" height="14" fill="none" stroke="#252423">
                <path v-if="f.k === 'sum'" d="M11.500 3V1.500h-10L7 7l-5.500 5.500h10V11" stroke-width="1.200" />
                <template v-if="f.k === 'date'"><rect x="1" y="1" width="11" height="11.500" rx="2" /><path d="M1 4.500h11" /><path d="M4 7.500h6M3.500 10h4.500" stroke-dasharray="1.300 1" /></template>
                <template v-if="f.k === 'calc'"><rect x="1.500" y=".7" width="10" height="12.600" rx="2" /><path d="M4 3.500h5.500v1.500H4z" /><path d="M3.500 8h6.500M3.500 10.500h6.500" stroke-width="1.500" stroke-dasharray="1.500 1" /></template>
              </svg>
              <span v-fit="f.w">{{ f.t }}</span>
            </div>
          </div>
          <div class="track"><div class="thumb"></div></div>
        </div>
      </aside>

      <div class="pagetabs">
        <div class="desk on"><svg width="22" height="18" fill="none" stroke="#605e5c" stroke-width="1.300"><path d="M2 2.500h18v11H2zM11 13.500v2.500M7 16h8" /></svg></div>
        <div class="phone"><svg width="14" height="21" fill="none" stroke="#605e5c" stroke-width="1.500"><rect x="1" y="1" width="12" height="19" rx="1.500" /><path d="M6 17h2" /></svg></div>
        <svg class="arrows" width="26" height="8"><path d="M4.500 0v8L0 4zM21.500 0v8L26 4z" fill="#c8c6c4" /></svg>
        <div class="pt"><span v-fit="35">Page 1</span></div>
        <div class="pt cur"><span v-fit="52">Summary</span><b class="x">x</b></div>
        <div class="add"><svg width="12" height="12"><path d="M6 1v10M1 6h10" stroke="#fff" stroke-width="2.400" /></svg></div>
      </div>
    </main>

    <footer class="status">
      <span v-fit="59">Page 2 of 2</span>
      <svg class="slider" width="122" height="14" stroke="#605e5c" fill="none"><path d="M0 7.500h5" stroke-width="1.500" /><path d="M9 7.500h100M59.500 5v5" /><path d="M42 2v11" stroke-width="4" /><path d="M114.500 7.500h8M118.500 3.500v8" stroke-width="1.200" /></svg>
      <span v-fit="23" class="pct">69%</span>
      <svg width="16" height="12" fill="none" stroke="#605e5c"><path d="M.5.500h15v11H.5z" /><path d="M3 5V3h2M11 3h2v2M13 7v2h-2M5 9H3V7" stroke="#117865" /></svg>
    </footer>

    <div class="taskbar">
      <div class="start"><svg width="16" height="16" fill="#fff"><path d="M0 2.300l6.500-.9v6.100H0zM7.300 1.300L16 0v7.500H7.300zM0 8.400h6.500v6.100L0 13.600zM7.300 8.400H16V16l-8.700-1.300z" /></svg></div>
      <div class="tbsearch">
        <svg width="22" height="22"><circle cx="11" cy="11" r="8.800" fill="none" stroke="#0a0a0a" stroke-width="2.600" /></svg>
        <span v-fit="127">Type here to search</span>
        <svg class="mic" width="13" height="18" fill="none" stroke="#252423" stroke-width="1.200"><rect x="4" y="1" width="5" height="11" rx="1" /><path d="M1.500 8v6.500h10V8M6.500 14.500v2M4 16.700h5" /></svg>
      </div>
      <div class="tb"><svg width="18" height="16" fill="none" stroke="#fff" stroke-width="1.200"><path d="M1.500 0v2.500h10V0M1.500 16v-2.500h10V16M1.500 5h10v6h-10zM15.500 0v4M15.500 10v6" /><path d="M14 5h3v3h-3z" fill="#fff" stroke="none" /></svg></div>
      <div class="tb run gap"><svg width="22" height="22"><path d="M1 10C2 4 6 1 11 1c6 0 10 4 10 9v3H8c0 4 6 6 11 3v4.500C11 24 3 20 3 13c0-3 2-5.500 5-7-4 0-6 2-7 4zM8 9.500h7C15 5 8.500 5 8 9.500z" fill="#0078d7" fill-rule="evenodd" /></svg></div>
      <div class="tb"><svg width="22" height="20"><path d="M0 2h9l2 2h11v14H0z" fill="#ffe291" /><path d="M1 1h7v2H1z" fill="#f5b83d" /><path d="M4 19v-7q0-1 1-1h12q1 0 1 1v7h-4v-4H8v4z" fill="#35b1e1" /></svg></div>
      <div class="tb"><svg width="24" height="24"><defs><linearGradient id="ff" x1=".7" y1="0" x2=".4" y2="1"><stop offset="0" stop-color="#ffe03d" /><stop offset=".45" stop-color="#ff8a2a" /><stop offset="1" stop-color="#f0256e" /></linearGradient></defs><path d="M2 7l2-3 2 3 5-2q1-3 4-4 0 3 3 5l1-2q4 4 4 9 0 10-11 10T1 13q0-4 1-6z" fill="url(#ff)" /><circle cx="12" cy="12.500" r="5" fill="#7542e5" /><path d="M5 8q5-2 8 1-3 0-3 3 3 2 6-1-1 6-6 5-5-2-5-8z" fill="#ff9640" /></svg></div>
      <div class="tb"><svg width="24" height="24"><rect width="24" height="24" rx="2" fill="#1e4e79" /><path d="M5 17Q2 5 5 4c7 1 9 7 11 11l4 2 2 4M5 5q4 6 3 11l2-2M15 14l1 4 2-1M17 3l2 3 3 1" fill="none" stroke="#d7e6f2" stroke-width="1.100" /></svg></div>
      <div class="tb run cur"><svg width="20" height="24"><path d="M11 0h8v24h-8z" fill="#d48b07" /><path d="M6 6h8v18H6z" fill="#eebb2c" /><path d="M0 12h8v12H0z" fill="#ffdc62" /></svg></div>
      <div class="tb run"><svg width="24" height="24"><path d="M1 14q1-9 12-9 9 0 9 7-1 10-12 10-2-1 0-4 0-3-4-2-4 2-5-2z" fill="#c9e3f2" /><circle cx="5" cy="13" r="2" fill="#e2574c" /><circle cx="9" cy="9" r="2" fill="#67b346" /><circle cx="14" cy="8" r="2" fill="#f2b63c" /><path d="M21 2l2 2L14 23l-2-1z" fill="#d9873b" /><path d="M18 1l6 1-3 5-3-1z" fill="#a8714a" /></svg></div>
      <div class="tray">
        <svg width="16" height="16" fill="none" stroke="#fff" stroke-width="1.200"><circle cx="11" cy="3.500" r="2.500" /><circle cx="5" cy="8" r="2.500" /><path d="M1 15q0-4.500 4-4.500T9 15M8.500 8q2-2 4-1.500 2.500.8 2.500 4.500" /></svg>
        <svg class="t2" width="12" height="8" fill="none" stroke="#fff" stroke-width="1.300"><path d="M1 7l5-5 5 5" /></svg>
        <svg class="t3" width="17" height="12" fill="none" stroke="#fff"><path d="M5.500 3.500h9v7h-9zM16 5.500v3" /><path d="M7 5h6v4H7z" fill="#fff" /><path d="M1 2.500h4v2q0 1.500-2 1.500T1 4.500zM2 0v2M4 0v2M3 6v3h2" /></svg>
        <svg class="t4" width="16" height="16" fill="none" stroke="#777c82" stroke-width="1.200"><path d="M3 15Q3 4 15 3M6 15q0-8 9-9M9 15q0-5 6-6M12 15q0-2 3-3" /><path d="M3 0v5M.5 1.300l5 2.500M5.500 1.300l-5 2.500" stroke="#fff" stroke-width=".9" /></svg>
        <svg class="t5" width="16" height="14" fill="none" stroke="#fff"><path d="M1 4.500h2.500L7 1v12L3.500 9.500H1z" /><path d="M9 5q1.500 2 0 4" /><path d="M11 3q3 4 0 8" stroke="#9a9da0" /><path d="M13 1q4.500 6 0 12" stroke="#666" /></svg>
        <div class="clock"><span v-fit="42">4:18 PM</span><span v-fit="52">4/22/2025</span></div>
        <svg class="t6" width="17" height="17" fill="none" stroke="#fff" stroke-width="1.200"><path d="M1 1.500h15v11.500h-5l-2.500 2.500L6 13H1z" /></svg>
        <i class="peek"></i>
      </div>
    </div>
  </div>
</template>

<style>
html, body { margin: 0; overflow: hidden; }
</style>

<style scoped>
.app { width: 1366px; height: 768px; display: flex; flex-direction: column; font-family: "Open Sans", "Noto Sans", sans-serif; font-size: 12px; line-height: 16px; color: #252423; background: #f3f2f1; white-space: nowrap; overflow: hidden; }
.app * { box-sizing: border-box; }
svg { flex: none; display: block; }
.titlebar { height: 34px; flex: none; background: #3b3a39; color: #fff; display: flex; align-items: center; padding-left: 15px; }
.doc { margin-left: 7px; width: 195px; padding-top: 7px; font-size: 11.500px; }
.tri { border: 5px solid transparent; border-top-color: #fff; border-bottom: 0; margin-left: 6px; }
.tsearch { margin-left: 234px; width: 400px; height: 24px; background: #c8c6c4; border-radius: 2px; display: flex; align-items: center; gap: 9px; padding-left: 17px; color: #3b3a39; font-size: 12.500px; }
.tsearch span { padding-top: 2px; }
.signin { margin-left: 206px; width: 37px; padding-top: 2px; }
.avatar { margin-left: 9px; }
.wins { margin-left: 31px; }

.menu { height: 34px; flex: none; background: #fafafa; display: flex; gap: 32px; padding-left: 23px; font-size: 13.300px; }
.mi { height: 31px; padding-top: 8px; }
.mi.file { margin-right: 5px; }
.mi.active { font-weight: 700; border-bottom: 3px solid #117865; }
.share { margin: 4px 6px 0 auto; width: 84px; height: 24px; border: 0; border-radius: 4px; background: #117865; color: #fff; font: 500 12px "Open Sans", sans-serif; display: flex; align-items: center; gap: 5px; padding: 0 0 0 7px; }
.share span { margin-left: 2px; padding-top: 1px; }

.ribbon { height: 92px; flex: none; background: #fafafa; display: flex; padding-top: 2px; z-index: 2; box-shadow: 0 1px 3px rgba(0, 0, 0, .28); }
.grp { height: 89px; border-right: 1px solid #d2d0ce; display: flex; flex-direction: column; }
.clip { width: 161px; }
.cliprow { display: flex; height: 77px; }
.paste { width: 52px; padding: 5px 0 0 14px; }
.paste svg { margin-left: -2px; }
.paste span { display: block; margin-top: 3px; }
.cliplist { color: #c3c1bf; padding-top: 1px; }
.cliplist div { display: flex; align-items: center; gap: 3px; height: 24px; }
.tools { display: flex; height: 77px; padding-top: 5px; }
.tool { display: flex; flex-direction: column; align-items: center; }
.tool > svg { margin-bottom: 1px; margin-left: 2px; }
.line { display: flex; align-items: center; gap: 3px; height: 16px; }
.off { color: #c3c1bf; }
.gname { text-align: center; font-size: 9.800px; line-height: 16px; height: 12px; }
.collapse { margin: 79px 4px 0 auto; }

.body { height: 543px; flex: none; display: grid; grid-template: 508px 35px / 41px 963px 181px 181px; }
.rail { grid-row: 1 / 3; background: #f3f2f1; border-right: 1px solid #d8d6d4; }
.ri { height: 40px; display: flex; align-items: center; justify-content: center; border-left: 3px solid transparent; padding-right: 3px; }
.ri.on { border-left-color: #117865; }
.center { display: flex; background: #fff; min-width: 0; }
.stage { width: 931px; border-right: 1px solid #a5a3a1; padding-left: 19px; }
.canvas { width: 892px; height: 502px; padding: 0 2px 2px;
  background:
    repeating-linear-gradient(to bottom, #555 0 2px, transparent 2px 4px) left top / 2px 100% no-repeat,
    repeating-linear-gradient(to bottom, #555 0 2px, transparent 2px 4px) right top / 2px 100% no-repeat,
    repeating-linear-gradient(to right, #555 0 2px, transparent 2px 4px) left bottom / 100% 2px no-repeat; }
h1 { margin: 0; text-align: center; font-size: 21px; line-height: 28px; padding-top: 6px; height: 59px; padding-right: 9px; }
.cards { display: flex; padding-left: 59px; height: 106px; }
.card { height: 83px; border: 1px solid #c8c6c4; display: flex; flex-direction: column; align-items: center; padding-left: 1px; }
.ct { font-size: 10.500px; color: #605e5c; margin-top: 10px; }
.cv { font: 500 38px/46px Roboto, sans-serif; color: #252423; margin-top: 4px; padding-left: 1px; }
.insights { padding-left: 15px; }
h2 { margin: 0; font-size: 16.300px; line-height: 22px; }
p { margin: 0; font-size: 12.300px; line-height: 18px; }
.filters { width: 32px; display: flex; flex-direction: column; align-items: center; padding: 12px 0 0; gap: 14px; }
.filters span { writing-mode: vertical-rl; font-size: 14px; font-weight: 600; line-height: 18px; margin-top: -6px; letter-spacing: .15px; }

.viz { grid-row: 1 / 3; border-left: 1px solid #e1dfdd; }
.phead { display: flex; align-items: center; justify-content: space-between; font-size: 15.500px; font-weight: 600; height: 38px; padding: 0 7px 0 8px; }
.bv { padding-left: 8px; font-weight: 600; font-size: 11.500px; height: 19px; }
.modes { display: flex; padding-left: 8px; gap: 34px; height: 35px; }
.mode { width: 32px; height: 32px; display: flex; align-items: center; justify-content: center; border-radius: 2px; }
.mode.on { background: #d2d0ce; }
.notch { margin-top: 1px; }
.vgrid { display: grid; grid-template-columns: repeat(6, 20px); gap: 8px; padding: 10px 0 8px 10px; height: 207px; align-content: start; border-bottom: 1px solid #d8d6d4; }
.wl { padding-left: 12px; height: 30px; padding-top: 9px; }
.wl.bold { font-weight: 600; color: #484644; height: 31px; padding-top: 11px; }
.drop { margin-left: 4px; width: 170px; height: 28px; border: 1px dashed #bebbb8; border-radius: 2px; background: #fff; padding: 5px 0 0 10px; }
.drop.two { height: 26px; padding: 5px 0 0 8px; margin-top: 5px; }
.tg { display: flex; align-items: center; justify-content: space-between; padding: 0 22px 0 12px; height: 27px; }
.wl.bold + .tg { margin-top: -1px; }
.sw { width: 32px; height: 16px; border: 1px solid #797775; border-radius: 8px; background: #fff; display: flex; align-items: center; justify-content: space-between; padding: 0 4px; }
.sw i { width: 8px; height: 8px; border-radius: 4px; background: #605e5c; }
.sw em { font-style: normal; font-size: 9px; color: #605e5c; }
.sw.on { background: #117865; border-color: #117865; }
.sw.on i { background: #fff; }
.sw.on em { color: #fff; font-weight: 600; }

.data { grid-row: 1 / 3; grid-column: 4; border-left: 1px solid #e1dfdd; }
.dsearch { margin: 7px 0 9px 4px; width: 172px; height: 24px; background: #fff; border: 1px solid #c8c6c4; border-bottom-color: #605e5c; border-radius: 4px; display: flex; align-items: center; gap: 6px; padding-left: 11px; color: #605e5c; font-size: 12.300px; }
.dsearch span { padding-top: 1px; }
.flist { display: flex; height: 457px; }
.frows { width: 168px; }
.field { display: flex; align-items: center; height: 24px; padding-left: 30px; font-size: 11.800px; }
.exp { margin-right: 6px; }
.cb { width: 12px; height: 12px; border: 1px solid #8a8886; border-radius: 2px; }
.fk { margin: 0 5px 0 8px; }
.thumb { width: 8px; height: 379px; margin-top: 78px; background: #8a8886; }

.pagetabs { grid-area: 2 / 2; background: #f3f2f1; display: flex; align-items: flex-start; }
.desk { width: 24px; height: 31px; margin-left: 10px; padding: 5px 0 0; border-bottom: 3px solid #117865; }
.phone { margin: 5px 0 0 25px; }
.arrows { margin: 14px 7px 0 21px; }
.pt { height: 35px; width: 77px; background: #fff; border-left: 1px solid #a19f9d; text-align: center; padding: 11px 2px 0 0; font-size: 11.500px; }
.pt.cur { width: 94px; font-weight: 600; border-bottom: 4px solid #117865; border-right: 1px solid #c8c6c4; border-left-color: #c8c6c4; position: relative; }
.x { position: absolute; right: 4px; top: 1px; font-size: 10px; font-weight: 600; line-height: 16px; }
.add { width: 39px; height: 35px; background: #117865; display: flex; align-items: center; justify-content: center; }

.status { height: 24px; flex: none; border-top: 1px solid #d8d6d4; display: flex; align-items: center; padding: 2px 18px 0 4px; color: #484644; font-size: 11.500px; }
.slider { margin-left: auto; }
.pct { margin: 0 19px 0 13px; color: #605e5c; width: 23px; }

.taskbar { height: 41px; flex: none; background: #050b12; display: flex; border-top: 1px solid #000; }
.start { width: 48px; display: flex; align-items: center; justify-content: center; }
.tbsearch { width: 344px; background: #f2f2f2; display: flex; align-items: center; padding-left: 9px; gap: 9px; font-size: 14px; color: #3b3a39; }
.tbsearch span { padding-top: 2px; }
.mic { margin: 0 14px 0 auto; }
.tb { width: 48px; margin-right: 1px; display: flex; align-items: center; justify-content: center; position: relative; }
.tb.gap { margin-left: 2px; }
.tb.run::after { content: ""; position: absolute; left: 4px; right: 4px; bottom: 0; height: 2px; background: #76b9ed; }
.tb.cur { background: #3a3f45; }
.tb.cur::after { left: 0; right: 0; }
.tray { margin-left: auto; display: flex; align-items: center; color: #fff; }
.t2 { margin-left: 22px; }
.t3 { margin-left: 10px; }
.t4 { margin-left: 8px; }
.t5 { margin-left: 8px; }
.clock { width: 71px; height: 36px; display: flex; flex-direction: column; align-items: center; line-height: 18px; font-size: 11.500px; }
.t6 { margin-left: 8px; }
.peek { width: 1px; height: 40px; background: #4a4f55; margin: 0 4px 0 19px; }
</style>
